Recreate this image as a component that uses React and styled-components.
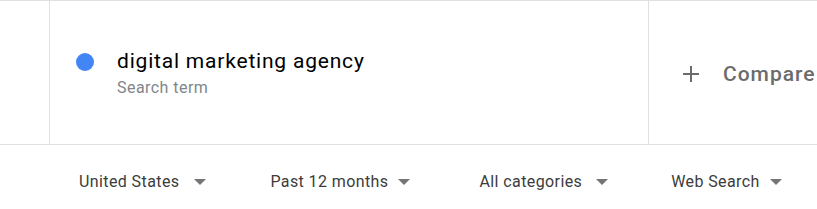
import styled, { createGlobalStyle } from 'styled-components';

const GlobalStyle = createGlobalStyle`
  html, body {
    margin: 0;
    padding: 0;
    background: #fff;
    font-family: Roboto, "Liberation Sans", Arial, sans-serif;
    overflow: hidden;
  }
`;

const Page = styled.div`
  width: 817px;
  height: 209px;
  overflow: hidden;
`;

const TermsBar = styled.div`
  display: flex;
  height: 143px;
  border-top: 1px solid #e0e0e0;
  border-bottom: 1px solid #e0e0e0;
`;

const Gutter = styled.div`
  width: 49px;
  flex-shrink: 0;
  border-right: 1px solid #e0e0e0;
`;

const TermCell = styled.div`
  width: 599px;
  flex-shrink: 0;
  border-right: 1px solid #e0e0e0;
  display: grid;
  grid-template-columns: 18px 1fr;
  column-gap: 23px;
  align-content: center;
  align-items: center;
  padding-left: 26px;
  box-sizing: border-box;
`;

const Dot = styled.span`
  width: 18px;
  height: 18px;
  border-radius: 50%;
  background: ${p => p.color};
  margin-top: 2px;
`;

const TermName = styled.div`
  font-size: 21px;
  letter-spacing: 0.8px;
  color: #000;
  line-height: 24px;
`;

const TermLabel = styled.div`
  grid-column: 2;
  font-size: 16px;
  letter-spacing: 0.45px;
  color: #80868b;
  line-height: 18px;
  margin-top: 6px;
`;

const CompareCell = styled.div`
  flex: 1;
  display: flex;
  align-items: center;
  padding-left: 33px;
  white-space: nowrap;
  color: #6b6b6b;
  padding-top: 2px;
`;

const Plus = styled.svg`
  width: 18px;
  height: 18px;
  flex-shrink: 0;
`;

const CompareLabel = styled.span`
  margin-left: 23px;
  font-size: 21px;
  font-weight: 500;
  letter-spacing: 1px;
`;

const FilterBar = styled.div`
  display: flex;
  align-items: center;
  height: 56px;
  padding-top: 8px;
  padding-left: 79px;
`;

const Filter = styled.div`
  display: flex;
  align-items: center;
  margin-right: ${p => p.$after}px;
  color: #3c3c3c;
  font-size: 16px;
  letter-spacing: 0.4px;
  white-space: nowrap;
`;

const Arrow = styled.span`
  width: 0;
  height: 0;
  border-left: 6px solid transparent;
  border-right: 6px solid transparent;
  border-top: 6px solid #757575;
  margin-left: ${p => p.$gap}px;
  margin-top: 1px;
`;

const filters = [
  { label: 'United States', gap: 15, after: 64 },
  { label: 'Past 12 months', gap: 10, after: 69 },
  { label: 'All categories', gap: 14, after: 63 },
  { label: 'Web Search', gap: 10, after: 0 },
];

export default function App() {
  return (
    <Page>
      <GlobalStyle />
      <TermsBar>
        <Gutter />
        <TermCell>
          <Dot color="#4285f4" />
          <TermName>digital marketing agency</TermName>
          <TermLabel>Search term</TermLabel>
        </TermCell>
        <CompareCell>
          <Plus viewBox="0 0 18 18">
            <path d="M9 1v16M1 9h16" stroke="#6b6b6b" strokeWidth="2" fill="none" />
          </Plus>
          <CompareLabel>Compare</CompareLabel>
        </CompareCell>
      </TermsBar>
      <FilterBar>
        {filters.map(f => (
          <Filter key={f.label} $after={f.after}>
            {f.label}
            <Arrow $gap={f.gap} />
          </Filter>
        ))}
      </FilterBar>
    </Page>
  );
}
